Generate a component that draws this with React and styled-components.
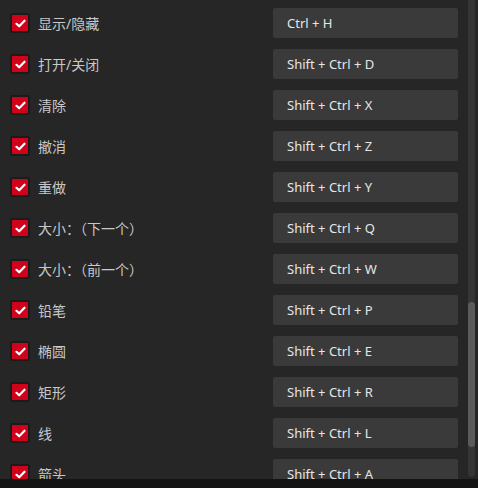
import React from 'react';
import styled, { createGlobalStyle } from 'styled-components';

const GlobalStyle = createGlobalStyle`
  html, body {
    margin: 0;
    padding: 0;
    background: #262626;
  }
`;

const shortcuts = [
  { label: '显示/隐藏', keys: 'Ctrl + H' },
  { label: '打开/关闭', keys: 'Shift + Ctrl + D' },
  { label: '清除', keys: 'Shift + Ctrl + X' },
  { label: '撤消', keys: 'Shift + Ctrl + Z' },
  { label: '重做', keys: 'Shift + Ctrl + Y' },
  { label: '大小：（下一个）', keys: 'Shift + Ctrl + Q' },
  { label: '大小：（前一个）', keys: 'Shift + Ctrl + W' },
  { label: '铅笔', keys: 'Shift + Ctrl + P' },
  { label: '椭圆', keys: 'Shift + Ctrl + E' },
  { label: '矩形', keys: 'Shift + Ctrl + R' },
  { label: '线', keys: 'Shift + Ctrl + L' },
  { label: '箭头', keys: 'Shift + Ctrl + A' },
];

const Page = styled.div`
  width: 478px;
  height: 488px;
  display: flex;
  flex-direction: column;
  background: #262626;
  font-family: 'Noto Sans', 'Noto Sans CJK SC', sans-serif;
`;

const Viewport = styled.div`
  height: 479px;
  display: flex;
  overflow: hidden;
`;

const List = styled.div`
  flex: 1;
  display: flex;
  flex-direction: column;
  gap: 11px;
  padding: 8px 10px 0 10px;
`;

const Row = styled.div`
  display: flex;
  align-items: center;
  height: 30px;
  flex-shrink: 0;
`;

const Check = styled.span`
  width: 16px;
  height: 16px;
  border: 2px solid #1b1b1b;
  border-radius: 2px;
  background: #d0011b;
  display: flex;
  align-items: center;
  justify-content: center;
  flex-shrink: 0;
`;

const Label = styled.span`
  margin-left: 8px;
  flex: 1;
  font-size: 14px;
  color: #c8c8c8;
`;

const Keys = styled.div`
  width: 185px;
  height: 30px;
  box-sizing: border-box;
  padding-left: 14px;
  display: flex;
  align-items: center;
  background: #3a3a3a;
  border-radius: 2px;
  font-size: 13px;
  color: #e6e6e6;
`;

const Track = styled.div`
  width: 7px;
  height: 477px;
  margin-right: 3px;
  background: #353535;
  border-radius: 0 0 4px 4px;
  display: flex;
  flex-direction: column;
`;

const Thumb = styled.div`
  margin-top: 302px;
  height: 145px;
  background: #5b5b5b;
  border-radius: 4px;
`;

const Footer = styled.div`
  flex: 1;
  background: #141414;
`;

const CheckIcon = () => (
  <svg width="11" height="9" viewBox="0 0 11 9">
    <path
      d="M1.5 4.8 L4.2 7.3 L9.5 1.7"
      fill="none"
      stroke="#fff"
      strokeWidth="2.2"
      strokeLinecap="round"
      strokeLinejoin="round"
    />
  </svg>
);

const App = () => (
  <Page>
    <GlobalStyle />
    <Viewport>
      <List>
        {shortcuts.map((s) => (
          <Row key={s.label}>
            <Check>
              <CheckIcon />
            </Check>
            <Label>{s.label}</Label>
            <Keys>{s.keys}</Keys>
          </Row>
        ))}
      </List>
      <Track>
        <Thumb />
      </Track>
    </Viewport>
    <Footer />
  </Page>
);

export default App;
